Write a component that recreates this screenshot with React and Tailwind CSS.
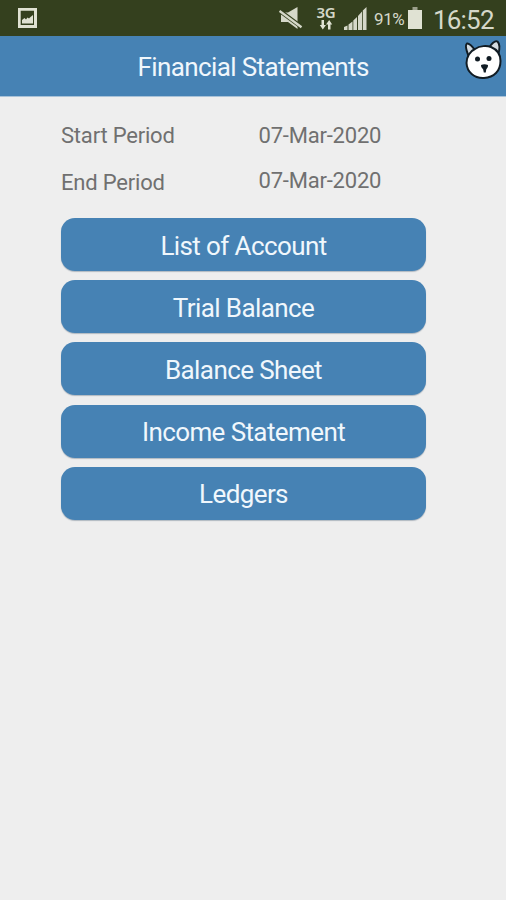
const REPORTS = [
  "List of Account",
  "Trial Balance",
  "Balance Sheet",
  "Income Statement",
  "Ledgers",
];

function PictureIcon() {
  return (
    <svg className="ml-[17px] h-[22px] w-[22px]" viewBox="0 0 22 22">
      <path fill="#e0e2d3" fillRule="evenodd" d="M1 1H20V21H1ZM3.700 3.700V18H17V3.700Z" />
      <path fill="#e0e2d3" d="M5 16.500V13L7.500 11L9 12.500L10.500 10.500L12 11.500L13.500 10L16 8V16.500Z" />
    </svg>
  );
}

function MutedIcon() {
  return (
    <svg className="h-[24px] w-[24px]" viewBox="0 0 24 24">
      <path fill="#d5d8c9" d="M2 6.500H9L18.500 1V23L9 16H2Z" />
      <path stroke="#34401e" strokeWidth="4.200" d="M0 4.300L24 22" />
      <path stroke="#d5d8c9" strokeWidth="2.400" d="M.5 5L22.500 21.300" />
    </svg>
  );
}

function DataArrows() {
  return (
    <svg className="h-[10px] w-[14px]" viewBox="0 0 14 10">
      <path fill="#e0e2d3" d="M2.500 0H5V5H7L3.800 9.500L.8 5H2.500ZM9 9.500H11.500V4.500H13.200L10.200 0L7 4.500H9Z" />
    </svg>
  );
}

function SignalIcon() {
  return (
    <svg className="h-[24px] w-[23px]" viewBox="0 0 23 24">
      <path
        fill="#d5d8c9"
        d="M0 21L3.500 19.500V24H0ZM4.500 18.500L8.500 15.500V24H4.500ZM9.300 14.500L13 11V24H9.300ZM14 10L18 5.500V24H14ZM18.800 4.500L22.500 1V24H18.800Z"
      />
    </svg>
  );
}

function BatteryIcon() {
  return (
    <svg className="h-[24px] w-[16px]" viewBox="0 0 16 24">
      <path fill="#9ca08c" d="M5.500 1H10.500V4H5.500Z" />
      <path fill="#e0e2d3" d="M1 4H15V23H1Z" />
    </svg>
  );
}

function CatIcon() {
  return (
    <svg className="h-[44px] w-[40px]" viewBox="0 0 40 44" stroke="#111c24" strokeWidth="2" strokeLinejoin="round">
      <path fill="#d4dbe0" d="M6 18C3 11 2 6 4 4.500C6 4 9 7 12 11Z" />
      <path fill="#d4dbe0" d="M26 9C28 5 32 1 34.500 2.500C37 5 37 10 35 16Z" />
      <path fill="#fff" d="M12 10C17 6.500 24 6.500 28 8C34 10.500 37.500 16 37.500 22C37.500 32 31 38.500 21 39C11 39.500 4 33 3.500 24C3.500 18 7 12 12 10Z" />
      <g fill="#111c24" stroke="none">
        <circle cx="14.500" cy="20" r="2.500" />
        <circle cx="26" cy="19.500" r="2.500" />
        <path d="M18 26Q21.500 24.500 25 26Q25.500 28.500 23.200 30.500L22.800 33.500H20.800L20.200 30.500Q17.500 28.500 18 26Z" />
      </g>
    </svg>
  );
}

export default function App() {
  return (
    <div className="flex h-[900px] w-[506px] flex-col overflow-hidden bg-[#eeeeee] font-['Roboto','Liberation_Sans',sans-serif]">
      <div className="flex h-9 shrink-0 items-center bg-[#34401e] text-[#d5d8c9]">
        <PictureIcon />
        <div className="ml-[240px]"><MutedIcon /></div>
        <div className="ml-[12px] flex w-[22px] flex-col items-center">
          <span className="font-['Noto_Sans',sans-serif] text-[15px] leading-[13px] font-semibold tracking-[-0.3px]">3G</span>
          <div className="mt-px"><DataArrows /></div>
        </div>
        <div className="ml-[7px]"><SignalIcon /></div>
        <span className="ml-[7px] w-[33px] pt-[3px] text-[17px] tracking-[-0.4px] whitespace-nowrap">91%</span>
        <div><BatteryIcon /></div>
        <span className="ml-[10px] pt-[3px] text-[26px] leading-[30px] tracking-[-0.8px]">16:52</span>
      </div>

      <header className="flex h-[61px] shrink-0 items-center border-b border-[#a8c2d8] bg-[#4682b4]">
        <h1 className="ml-[137.5px] w-[236px] pt-[2px] text-[26px] tracking-[-0.62px] whitespace-nowrap text-[#f0f7fc]">Financial Statements</h1>
        <div className="mb-[10px] ml-[89.5px]"><CatIcon /></div>
      </header>

      <main className="pl-[61px]">
        <div className="mt-[23px] flex h-[30px] items-center text-[22px] tracking-[-0.2px] text-[#707070]">
          <span className="w-[197.5px]">Start Period</span>
          <span>07-Mar-2020</span>
        </div>
        <div className="mt-[16px] flex h-[30px] items-center text-[22px] tracking-[-0.2px] text-[#707070]">
          <span className="w-[197.5px] pt-[2px]">End Period</span>
          <span className="pb-px">07-Mar-2020</span>
        </div>
        <div className="mt-[22px] flex w-[365px] flex-col gap-[9.2px]">
          {REPORTS.map((name) => (
            <button
              key={name}
              className="flex h-[53px] items-center justify-center rounded-[14px] bg-[#4682b4] pt-[3px] text-[26px] tracking-[-0.6px] text-[#f0f7fc] shadow-[0_1px_1px_#b0b8c0]"
            >
              {name}
            </button>
          ))}
        </div>
      </main>
    </div>
  );
}
